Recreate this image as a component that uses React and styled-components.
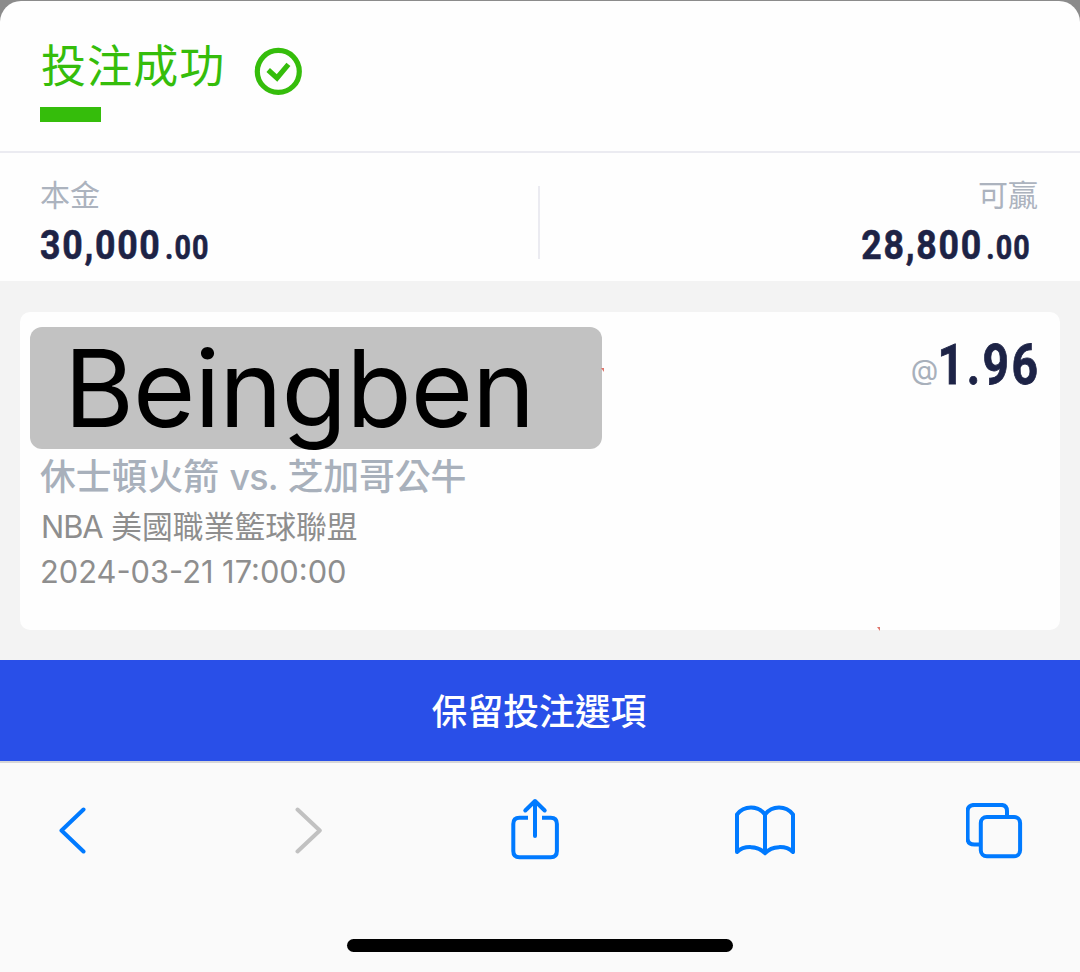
import React from "react";

import styled, { createGlobalStyle } from 'styled-components';

const App = () => {

    return (
        <>
            <GlobalStyle />
            <Page>
                <Sheet>
                    <Header>
                        <div>
                            <Title>投注成功</Title>
                            <Underline />
                        </div>
                        <CheckIcon />
                    </Header>

                    <Summary>
                        <Amount label="本金" whole="30,000" cents=".00" />
                        <Divider />
                        <Amount label="可贏" whole="28,800" cents=".00" right />
                    </Summary>
                </Sheet>

                <Slip>
                    <Card>
                        <CardTop>
                            <Cover><CoverText>Beingben</CoverText></Cover>
                            <Odds>
                                <At>@</At>
                                <OddsValue>1.96</OddsValue>
                            </Odds>
                        </CardTop>
                        <Match>休士頓火箭 <span>vs.</span> 芝加哥公牛</Match>
                        <League><span>NBA</span> 美國職業籃球聯盟</League>
                        <Time>2024-03-21 17:00:00</Time>
                        <Speck $left={581} $top={56} />
                        <Speck $left={857} $top={315} />
                    </Card>
                </Slip>

                <KeepButton>保留投注選項</KeepButton>

                <Toolbar>
                    <Icons>
                        <BackIcon />
                        <ForwardIcon />
                        <ShareIcon />
                        <BookIcon />
                        <TabsIcon />
                    </Icons>
                    <HomeBar />
                </Toolbar>
            </Page>
        </>
    )
}

export default App;

const Amount = ({ label, whole, cents, right }) => (
    <AmountBox $right={right}>
        <Label $right={right}>{label}</Label>
        <Value $right={right}>{whole}<small>{cents}</small></Value>
    </AmountBox>
)

const CheckIcon = () => (
    <Check width="48" height="48" viewBox="0 0 48 48" fill="none" stroke="#35bd0b">
        <circle cx="24.3" cy="24.4" r="21" strokeWidth="5.2" />
        <path d="M14.2 23L23 31L34.4 17.4" strokeWidth="5.2" />
    </Check>
)

const BackIcon = () => (
    <Icon width="28" height="48" viewBox="0 0 28 48">
        <path d="M25.5 2.5L3.5 23.5L25.5 44.5" />
    </Icon>
)

const ForwardIcon = () => (
    <Icon width="28" height="48" viewBox="0 0 28 48" $color="#c1c1c1" $gap={209}>
        <path d="M2.5 2.5L24.8 23.5L2.5 44.5" />
    </Icon>
)

const ShareIcon = () => (
    <Icon width="48" height="66" viewBox="0 0 48 66" $gap={188}>
        <path d="M17 19.7H8.5Q2.3 19.7 2.3 25.9V53.1Q2.3 59.3 8.5 59.3H39.7Q45.9 59.3 45.9 53.1V25.9Q45.9 19.7 39.7 19.7H31" strokeLinecap="butt" />
        <path d="M24 38V3M14.3 12.5L24 3L33.7 12.5" />
    </Icon>
)

const BookIcon = () => (
    <Icon width="60" height="52" viewBox="0 0 60 52" $gap={176}>
        <path d="M30 9.5C23 0.2 9 0.2 2 9.5V47C9 40.3 23 40.3 30 48.3C37 40.3 51 40.3 58 47V9.5C51 0.2 37 0.2 30 9.5V48" />
    </Icon>
)

const TabsIcon = () => (
    <Icon width="58" height="56" viewBox="0 0 58 56" $gap={171}>
        <path d="M14 41.5H8.5Q1.6 41.5 1.6 35.5V8Q1.6 1.9 8.5 1.9H35Q41 1.9 41 8V13" strokeLinecap="butt" />
        <rect x="14.8" y="14" width="39.3" height="39.3" rx="6" />
    </Icon>
)

const GlobalStyle = createGlobalStyle`
    body {
        margin: 0;
        background: #8b8b8b;
    }
`;

const Page = styled.div`
    width: 1080px;
    height: 972px;
    overflow: hidden;
    display: flex;
    flex-direction: column;

    background: #8b8b8b;
    font-family: Inter, 'Noto Sans CJK TC', sans-serif;
    white-space: nowrap;
`;

const Sheet = styled.div`
    height: 280px;
    margin-top: 1px;
    background: #fefefe;
    border-radius: 21px 21px 0 0;
`;

const Header = styled.div`
    display: flex;
    height: 152px;
    padding-left: 40px;
    box-sizing: border-box;
    border-bottom: 2px solid #ebebf1;
`;

const Title = styled.div`
    margin: 33px -1px 0 1px;
    height: 60px;
    line-height: 60px;
    font-family: 'Noto Sans CJK TC', sans-serif;
    font-weight: 400;
    font-size: 45px;
    letter-spacing: 1.1px;
    color: #35bd0b;
`;

const Underline = styled.div`
    width: 61px;
    height: 15px;
    margin-top: 13px;
    background: #35bd0b;
`;

const Check = styled.svg`
    margin: 46px 0 0 30px;
`;

const Summary = styled.div`
    display: grid;
    grid-template-columns: 498px 2px 1fr;
    padding: 0 41px 0 40px;
`;

const Divider = styled.div`
    height: 73px;
    margin-top: 33px;
    background: #ebebf1;
`;

const AmountBox = styled.div`
    display: flex;
    flex-direction: column;
    align-items: ${props => props.$right ? 'flex-end' : 'flex-start'};
`;

const Label = styled.div`
    margin: 20px ${props => props.$right ? '1px' : '0'} 0 0;
    line-height: 40px;
    font-family: 'Noto Sans CJK TC', sans-serif;
    font-weight: 400;
    font-size: 30px;
    color: #acb3be;
`;

const Value = styled.div`
    line-height: 50px;
    margin: 7px ${props => props.$right ? '8px' : '0'} 0 0;
    font-family: Roboto, sans-serif;
    font-weight: 700;
    font-size: 41px;
    letter-spacing: 2px;
    color: #1d2346;
    -webkit-text-stroke: 0.6px #1d2346;
    transform: scaleX(0.87);
    transform-origin: ${props => props.$right ? 'right' : 'left'};

    small {
        margin-left: 4px;
        font-size: 33px;
        letter-spacing: 1.2px;
    }
`;

const Slip = styled.div`
    height: 379px;
    padding: 31px 20px 30px;
    box-sizing: border-box;
    background: #f3f3f3;
`;

const Card = styled.div`
    position: relative;
    height: 318px;
    padding: 15px 22px 0 10px;
    box-sizing: border-box;
    background: #fefefe;
    border-radius: 10px;
`;

const CardTop = styled.div`
    display: flex;
    justify-content: space-between;
`;

const Cover = styled.div`
    width: 572px;
    height: 122px;
    padding-left: 34px;
    box-sizing: border-box;
    background: #c2c2c2;
    border-radius: 12px;
`;

const CoverText = styled.div`
    line-height: 122px;
    font-weight: 400;
    font-size: 107px;
    letter-spacing: -1px;
    color: #000;
`;

const Odds = styled.div`
    display: flex;
    align-items: baseline;
    height: 76px;
    line-height: 76px;
`;

const At = styled.span`
    position: relative;
    top: -4px;
    font-size: 28.5px;
    color: #a8b0bb;
`;

const OddsValue = styled.span`
    margin: 0 -3px 0 -20px;
    font-family: Roboto, sans-serif;
    font-weight: 700;
    font-size: 55px;
    letter-spacing: 3px;
    color: #1d2346;
    -webkit-text-stroke: 0.8px #1d2346;
    transform: scaleX(0.84);
    transform-origin: right;
`;

const Match = styled.div`
    margin: 3px 0 0 10px;
    line-height: 50px;
    font-weight: 500;
    font-size: 35.8px;
    color: #a8b0bb;

    span {
        margin-left: 1px;
        letter-spacing: -0.8px;
    }
`;

const League = styled.div`
    margin-left: 11px;
    line-height: 50px;
    font-size: 30.8px;
    color: #8e8e8e;

    span {
        letter-spacing: -1px;
    }
`;

const Time = styled.div`
    margin: -1px 0 0 10px;
    line-height: 42px;
    font-size: 30.8px;
    color: #8e8e8e;
`;

const Speck = styled.div`
    position: absolute;
    left: ${props => props.$left}px;
    top: ${props => props.$top}px;
    width: 3px;
    height: 4px;
    background: #e0776d;
    clip-path: polygon(0 0, 100% 0, 100% 100%);
`;

const KeepButton = styled.button`
    height: 101px;
    padding: 0 2px 4px 0;
    border: none;
    background: #294fe8;
    color: #fff;
    font-family: 'Noto Sans CJK TC', sans-serif;
    font-weight: 500;
    font-size: 35.8px;
`;

const Toolbar = styled.div`
    flex: 1;
    display: flex;
    flex-direction: column;
    justify-content: space-between;
    border-top: 2px solid #d6d6d8;
    background: #fafafa;
`;

const Icons = styled.div`
    display: flex;
    align-items: center;
    height: 66px;
    margin: 35px 0 0 58px;
`;

const Icon = styled.svg`
    margin-left: ${props => props.$gap || 0}px;
    fill: none;
    stroke: ${props => props.$color || '#007aff'};
    stroke-width: 4;
    stroke-linecap: round;
    stroke-linejoin: round;
`;

const HomeBar = styled.div`
    width: 386px;
    height: 13px;
    margin: 0 auto 20px;
    border-radius: 7px;
    background: #000;
`;
